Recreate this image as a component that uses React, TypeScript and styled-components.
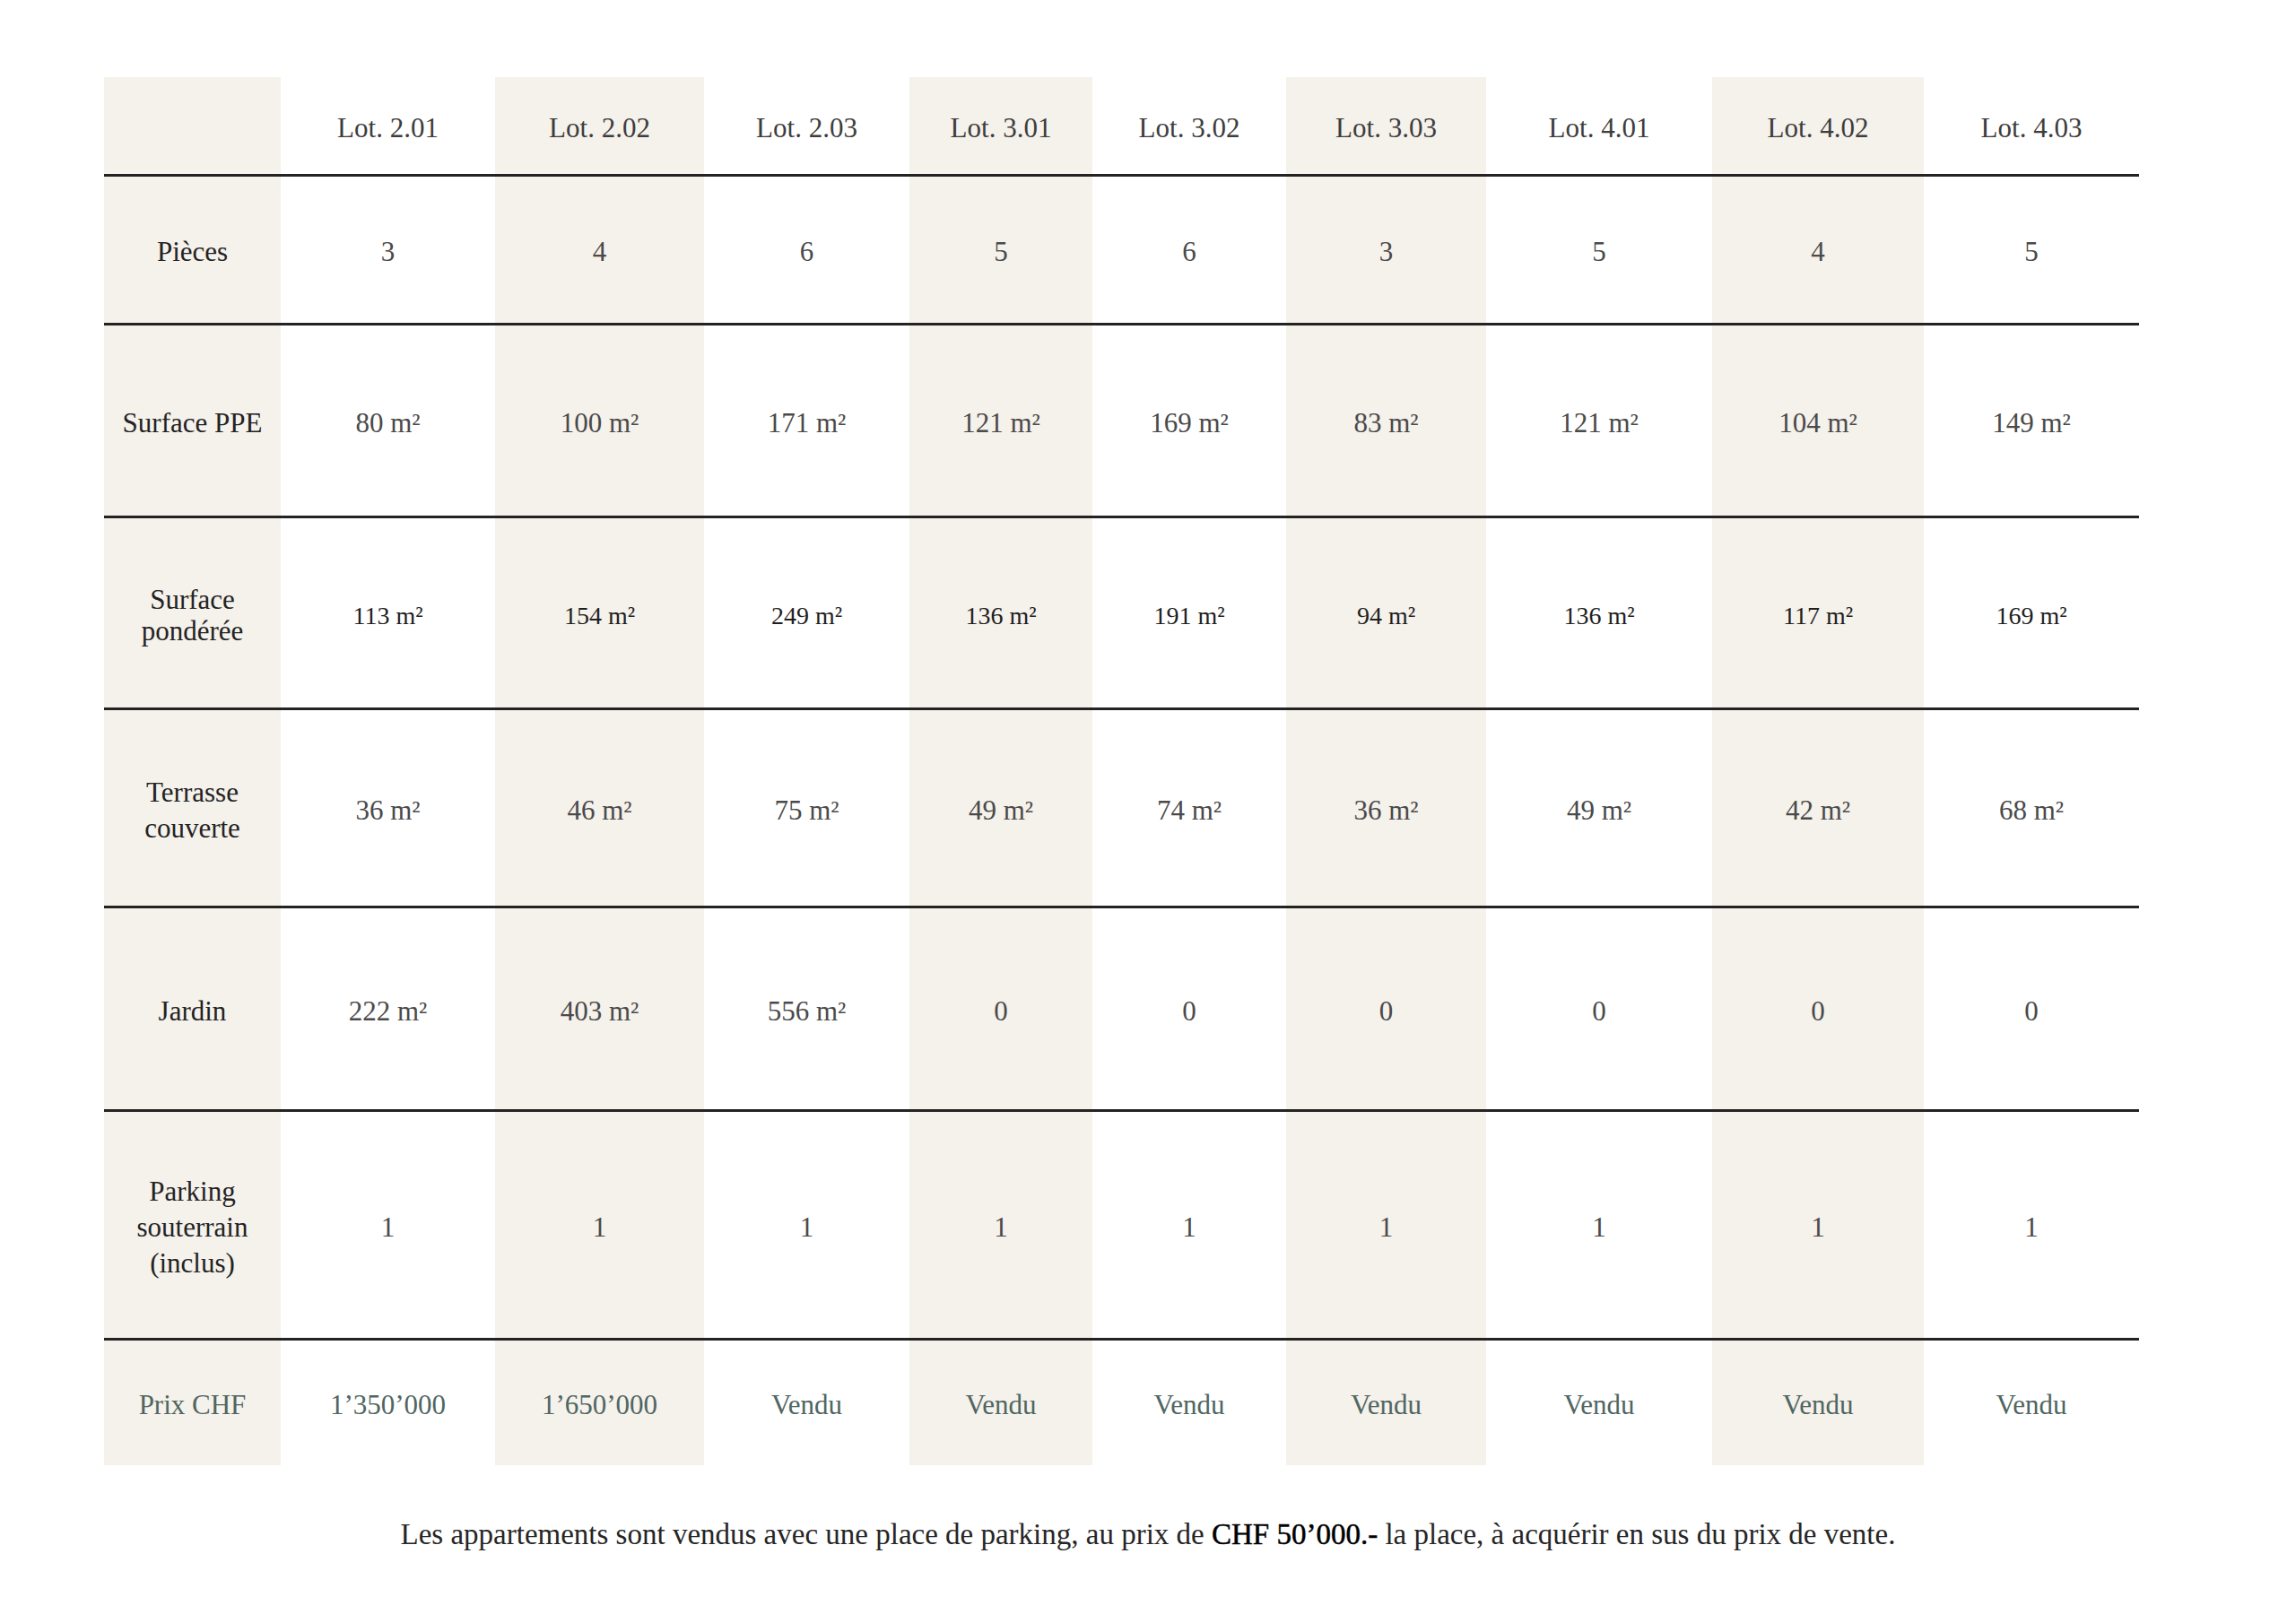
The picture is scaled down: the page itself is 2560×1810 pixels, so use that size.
import React from "react";
import styled, { createGlobalStyle } from "styled-components";

const GlobalStyle = createGlobalStyle`
  html, body {
    margin: 0;
    padding: 0;
    background: #ffffff;
  }
  body {
    font-family: "Liberation Serif", "Times New Roman", serif;
    color: #232323;
  }
`;

const COLUMNS = "197px 239px 233px 229px 204px 216px 223px 252px 236px 240px";
const BEIGE = "#f5f1eb";
const SLATE = "#4f6662";

const Page = styled.div`
  width: 2560px;
  min-height: 1810px;
  box-sizing: border-box;
  padding: 86px 0 0 116px;
`;

const Table = styled.div`
  display: flex;
  flex-direction: column;
  width: 2269px;
`;

const Row = styled.div<{ $height: number; $ruled?: boolean }>`
  display: grid;
  grid-template-columns: ${COLUMNS};
  height: ${(p) => p.$height}px;
  box-sizing: border-box;
  border-top: ${(p) => (p.$ruled ? "3px solid #232323" : "none")};
`;

type Tone = "label" | "tight" | "head" | "value" | "dense" | "price";

const Cell = styled.div<{ $shaded?: boolean; $tone?: Tone }>`
  display: flex;
  align-items: center;
  justify-content: center;
  text-align: center;
  box-sizing: border-box;
  padding-top: 5px;
  background: ${(p) => (p.$shaded ? BEIGE : "transparent")};
  font-size: ${(p) => (p.$tone === "dense" ? "28px" : "31px")};
  line-height: ${(p) => (p.$tone === "dense" || p.$tone === "tight" ? "35px" : "40px")};
  white-space: pre-line;
  color: ${(p) => {
    switch (p.$tone) {
      case "head":
        return "#3d3d3d";
      case "value":
        return "#4a4a4a";
      case "dense":
        return "#1f1f1f";
      case "price":
        return SLATE;
      default:
        return "#232323";
    }
  }};
`;

const Note = styled.p`
  margin: 59px 0 0 -116px;
  text-align: center;
  font-size: 33px;
  color: #262626;
  strong {
    font-weight: 400;
    color: #000;
    -webkit-text-stroke: 0.5px #000;
  }
`;

const lots = ["2.01", "2.02", "2.03", "3.01", "3.02", "3.03", "4.01", "4.02", "4.03"];

type Line = {
  label: string;
  height: number;
  values: string[];
  tone: Tone;
  labelTone?: Tone;
};

const rows: Line[] = [
  { label: "Pièces", height: 166, tone: "value", values: ["3", "4", "6", "5", "6", "3", "5", "4", "5"] },
  {
    label: "Surface PPE",
    height: 215,
    tone: "value",
    values: ["80 m²", "100 m²", "171 m²", "121 m²", "169 m²", "83 m²", "121 m²", "104 m²", "149 m²"],
  },
  {
    label: "Surface\npondérée",
    height: 214,
    tone: "dense",
    labelTone: "tight",
    values: ["113 m²", "154 m²", "249 m²", "136 m²", "191 m²", "94 m²", "136 m²", "117 m²", "169 m²"],
  },
  {
    label: "Terrasse\ncouverte",
    height: 221,
    tone: "value",
    values: ["36 m²", "46 m²", "75 m²", "49 m²", "74 m²", "36 m²", "49 m²", "42 m²", "68 m²"],
  },
  {
    label: "Jardin",
    height: 227,
    tone: "value",
    values: ["222 m²", "403 m²", "556 m²", "0", "0", "0", "0", "0", "0"],
  },
  {
    label: "Parking\nsouterrain\n(inclus)",
    height: 255,
    tone: "value",
    values: ["1", "1", "1", "1", "1", "1", "1", "1", "1"],
  },
  {
    label: "Prix CHF",
    height: 142,
    tone: "price",
    labelTone: "price",
    values: ["1’350’000", "1’650’000", "Vendu", "Vendu", "Vendu", "Vendu", "Vendu", "Vendu", "Vendu"],
  },
];

export default function App() {
  return (
    <Page>
      <GlobalStyle />
      <Table>
        <Row $height={108}>
          <Cell $shaded />
          {lots.map((lot, i) => (
            <Cell key={lot} $shaded={i % 2 === 1} $tone="head">
              Lot. {lot}
            </Cell>
          ))}
        </Row>
        {rows.map((row) => (
          <Row key={row.label} $height={row.height} $ruled>
            <Cell $shaded $tone={row.labelTone ?? "label"}>
              {row.label}
            </Cell>
            {row.values.map((v, i) => (
              <Cell key={i} $shaded={i % 2 === 1} $tone={row.tone}>
                {v}
              </Cell>
            ))}
          </Row>
        ))}
      </Table>
      <Note>
        Les appartements sont vendus avec une place de parking, au prix de <strong>CHF 50’000.-</strong> la
        place, à acquérir en sus du prix de vente.
      </Note>
    </Page>
  );
}
